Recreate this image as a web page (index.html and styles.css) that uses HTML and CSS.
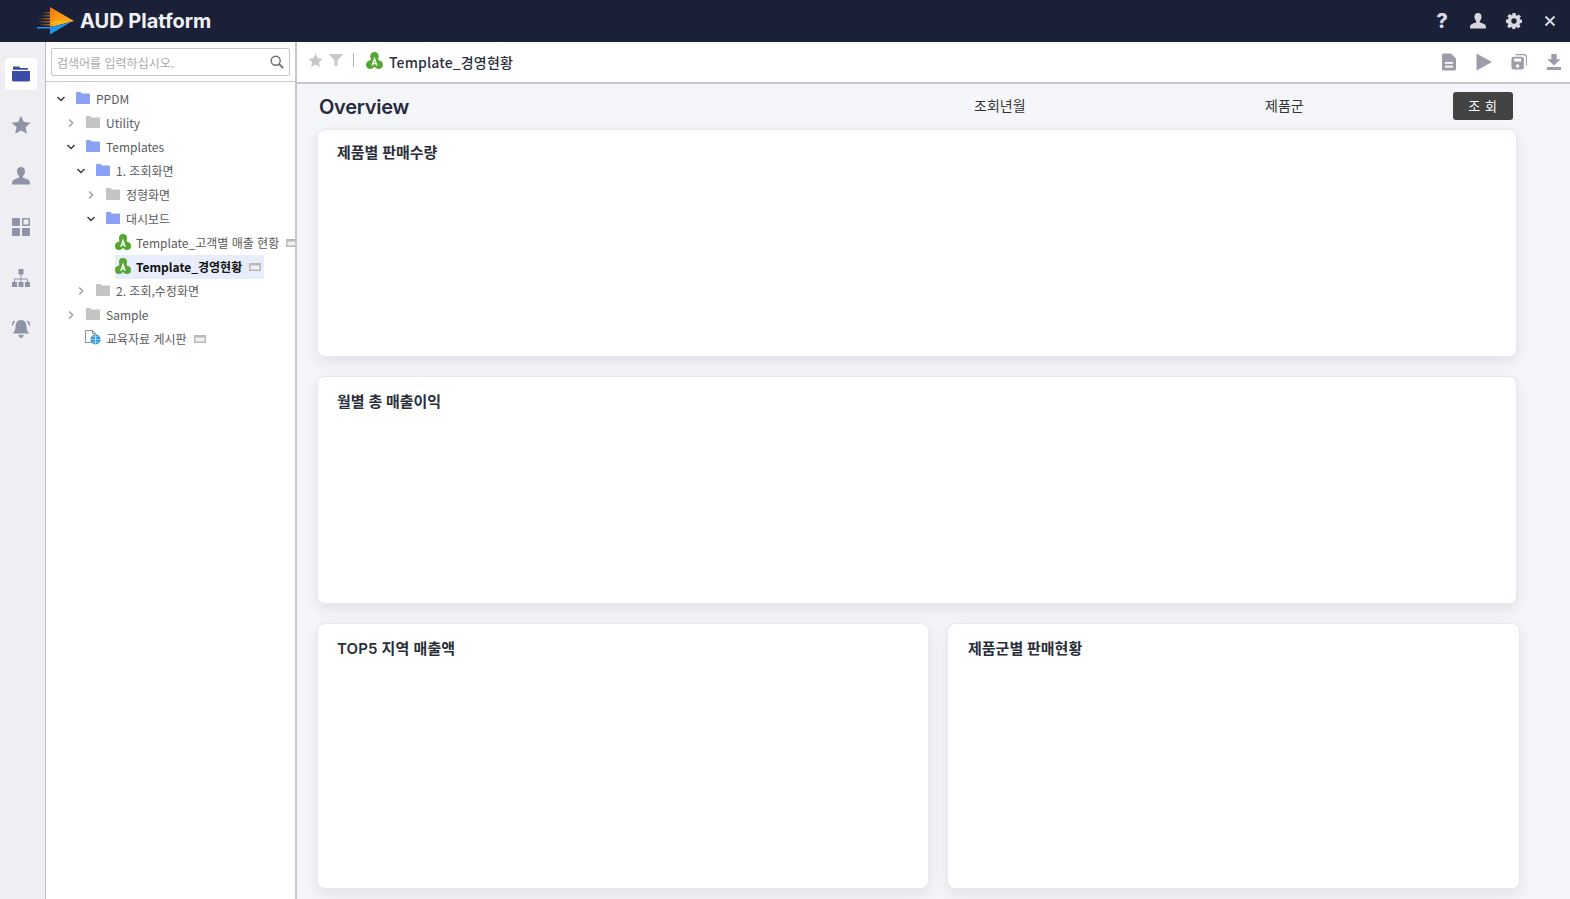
FILE: index.html
```html
<!DOCTYPE html>
<html lang="ko">
<head>
<meta charset="utf-8">
<title>AUD Platform</title>
<link rel="stylesheet" href="styles.css">
</head>
<body>
<svg class="defs" aria-hidden="true">
  <symbol id="folder" viewBox="0 0 14 12"><path d="M0 1a1 1 0 0 1 1-1h3.600l1.200 1.600H13a1 1 0 0 1 1 1V11a1 1 0 0 1-1 1H1a1 1 0 0 1-1-1z"/></symbol>
  <symbol id="open" viewBox="0 0 10 10"><path d="M1.500 3l3.500 3.500L8.500 3" fill="none" stroke="currentColor" stroke-width="1.500"/></symbol>
  <symbol id="closed" viewBox="0 0 10 10"><path d="M3.200 1.500L6.700 5 3.200 8.500" fill="none" stroke="currentColor" stroke-width="1.400"/></symbol>
  <symbol id="report" viewBox="0 0 16 16">
    <circle cx="8" cy="4" r="4" fill="#55a630"/><circle cx="4" cy="12" r="4" fill="#55a630"/><circle cx="12" cy="12" r="4" fill="#55a630"/><circle cx="8" cy="9.500" r="4.500" fill="#55a630"/>
    <path d="M5.800 12.800L8 6.500l2.200 6.300M6.500 10.900h3" fill="none" stroke="#fff" stroke-width="1.300"/>
  </symbol>
  <symbol id="win" viewBox="0 0 12 8"><rect width="12" height="8" fill="#b8b8b8"/><rect x="1.500" y="2.500" width="9" height="4" fill="#f0f0f0"/></symbol>
  <symbol id="star" viewBox="0 0 20 20"><path d="M10 .8l2.800 6.200 6.700.7-5 4.500 1.400 6.600L10 15.400 4.100 18.800l1.400-6.600-5-4.500 6.700-.7z"/></symbol>
  <symbol id="person" viewBox="0 0 18 18"><path d="M9 0c2.600 0 4 1.900 4 4.300 0 2-1 3.800-2 4.700v1.500c0 .6 5.700 1.600 6.500 3.500.3.800.5 2 .5 3.500H0c0-1.500.2-2.700.5-3.500C1.300 12.100 7 11.100 7 10.500V9C6 8.100 5 6.300 5 4.300 5 1.900 6.400 0 9 0z"/></symbol>
</svg>

<header class="topbar">
  <div class="brand">
    <svg class="logo" viewBox="0 0 38 28">
      <defs>
        <linearGradient id="streak" x1="0" x2="1" y1="0" y2="0"><stop offset="0" stop-color="#f08010" stop-opacity="0"/><stop offset="1" stop-color="#f08010"/></linearGradient>
        <linearGradient id="upper" x1="0" x2="1" y1="0" y2="1"><stop offset="0" stop-color="#f4780f"/><stop offset="1" stop-color="#fbb01c"/></linearGradient>
      </defs>
      <path d="M13 0l24 14H13z" fill="url(#upper)"/>
      <path d="M13 14h24l-21 5.500h-3z" fill="#fcb71e"/>
      <path d="M13 20.500l21-5.500-21 12.500z" fill="#2196ee"/>
      <path d="M0 20h14v1.500H0z" fill="#2196ee"/>
      <rect x="6" y="5" width="10" height="1.500" fill="url(#streak)"/>
      <rect x="4" y="8" width="12" height="1.500" fill="url(#streak)"/>
      <rect x="2" y="11" width="14" height="1.500" fill="url(#streak)"/>
      <rect x="0" y="14" width="16" height="1.500" fill="url(#streak)"/>
      <rect x="2" y="17" width="14" height="1.500" fill="url(#streak)"/>
    </svg>
    <span class="brand-name">AUD Platform</span>
  </div>
  <div class="top-actions">
    <span class="help">?</span>
    <svg class="top-icon user"><use href="#person"/></svg>
    <svg class="top-icon" viewBox="0 0 18 18"><path fill-rule="evenodd" d="M7.300 0h3.400l.4 2.400 1.300.6 2-1.400 2.400 2.400-1.400 2 .6 1.300 2 .4v3.400l-2.400.4-.6 1.300 1.400 2-2.400 2.400-2-1.400-1.300.6-.4 2.400H7.300l-.4-2.400-1.300-.6-2 1.400-2.400-2.400 1.400-2-.6-1.300-2-.4V7.300l2.400-.4.600-1.300-1.400-2 2.400-2.400 2 1.400 1.300-.6zM9 6a3 3 0 1 0 0 6 3 3 0 0 0 0-6z"/></svg>
    <svg class="top-close" viewBox="0 0 12 12"><path d="M1.500 1.500l9 9m0-9l-9 9" fill="none" stroke="currentColor" stroke-width="2"/></svg>
  </div>
</header>

<div class="workspace">
  <nav class="rail">
    <div class="rail-btn active"><svg viewBox="0 0 18 15"><path d="M1 0h6l1.500 1.500H16v1.800H1z"/><path d="M0 4.500h18v9A1.500 1.500 0 0 1 16.500 15h-15A1.500 1.500 0 0 1 0 13.500z"/></svg></div>
    <div class="rail-btn"><svg class="big"><use href="#star"/></svg></div>
    <div class="rail-btn"><svg><use href="#person"/></svg></div>
    <div class="rail-btn"><svg viewBox="0 0 18 18"><rect width="8" height="8" rx="1"/><path fill-rule="evenodd" d="M11 0h6a1 1 0 0 1 1 1v6a1 1 0 0 1-1 1h-6a1 1 0 0 1-1-1V1a1 1 0 0 1 1-1zm.5 1.500v5h5v-5z"/><rect y="10" width="8" height="8" rx="1"/><rect x="10" y="10" width="8" height="8" rx="1"/></svg></div>
    <div class="rail-btn"><svg viewBox="0 0 18 18"><path d="M6.500 0h5v5.500h-5zM0 13h5v5H0zM6.500 13h5v5h-5zM13 13h5v5h-5z"/><path d="M9 5.500V13M2.500 13v-3h13v3" fill="none" stroke="currentColor"/></svg></div>
    <div class="rail-btn"><svg viewBox="1 .5 18 18"><path d="M10 .5c3.800 0 5.400 3 5.400 6 0 3.500 1 5.500 3 7.500H1.600c2-2 3-4 3-7.500 0-3 1.600-6 5.400-6zM7.500 15.200h5c0 1.900-1.100 3.100-2.500 3.100s-2.500-1.200-2.500-3.100z"/><path d="M3.600 1.600C2 2.900 1.200 4.400 1 6.500m15.400-4.900C18 2.900 18.800 4.400 19 6.500" fill="none" stroke="currentColor" stroke-width="1.400"/></svg></div>
  </nav>

  <aside class="side">
    <div class="search-area">
      <div class="search">
        <span class="search-text">검색어를 입력하십시오.</span>
        <svg class="search-icon" viewBox="0 0 14 14"><circle cx="5.700" cy="5.700" r="4.500" fill="none" stroke="currentColor" stroke-width="1.400"/><path d="M9 9l4.200 4.200" stroke="currentColor" stroke-width="1.800"/></svg>
      </div>
    </div>
    <div class="tree">
      <div class="row l0"><svg class="chev dark"><use href="#open"/></svg><svg class="fold blue"><use href="#folder"/></svg><span>PPDM</span></div>
      <div class="row l1"><svg class="chev"><use href="#closed"/></svg><svg class="fold"><use href="#folder"/></svg><span>Utility</span></div>
      <div class="row l1"><svg class="chev dark"><use href="#open"/></svg><svg class="fold blue"><use href="#folder"/></svg><span>Templates</span></div>
      <div class="row l2"><svg class="chev dark"><use href="#open"/></svg><svg class="fold blue"><use href="#folder"/></svg><span>1. 조회화면</span></div>
      <div class="row l3"><svg class="chev"><use href="#closed"/></svg><svg class="fold"><use href="#folder"/></svg><span>정형화면</span></div>
      <div class="row l3"><svg class="chev dark"><use href="#open"/></svg><svg class="fold blue"><use href="#folder"/></svg><span>대시보드</span></div>
      <div class="row l4"><svg class="rep"><use href="#report"/></svg><span class="leaf-text">Template_고객별 매출 현황</span><svg class="win"><use href="#win"/></svg></div>
      <div class="row l4"><div class="selected"><svg class="rep"><use href="#report"/></svg><span class="leaf-text strong">Template_경영현황</span><svg class="win"><use href="#win"/></svg></div></div>
      <div class="row l2"><svg class="chev"><use href="#closed"/></svg><svg class="fold"><use href="#folder"/></svg><span>2. 조회,수정화면</span></div>
      <div class="row l1"><svg class="chev"><use href="#closed"/></svg><svg class="fold"><use href="#folder"/></svg><span>Sample</span></div>
      <div class="row l1b">
        <svg class="doc" viewBox="0 0 16 15"><path d="M.5.500h7l3 3v9h-10z" fill="#fff" stroke="#8a8f98"/><path d="M7.500.500v3h3" fill="none" stroke="#8a8f98"/><circle cx="10.500" cy="9.500" r="5" fill="#2d92d4"/><path d="M5.500 9.500h10M10.500 4.500v10M7.500 6.500c2 1 4 1 6 0M7.500 12.500c2-1 4-1 6 0" fill="none" stroke="#d9eefb" stroke-width=".7"/></svg>
        <span>교육자료 게시판</span><svg class="win"><use href="#win"/></svg>
      </div>
    </div>
  </aside>

  <main class="main">
    <div class="toolbar">
      <svg class="tb-star"><use href="#star"/></svg>
      <svg class="tb-filter" viewBox="0 0 14 14"><path d="M0 1h14L8.500 7.500V13h-3V7.500z"/></svg>
      <span class="tb-div"></span>
      <svg class="tb-rep"><use href="#report"/></svg>
      <span class="tb-title">Template_경영현황</span>
      <div class="tb-right">
        <svg class="tb-i" viewBox="0 0 16 18"><path fill-rule="evenodd" d="M2.500 .5h7.500l5 5v10.500a1.500 1.500 0 0 1-1.500 1.500h-11A1.500 1.500 0 0 1 1 16V2a1.500 1.500 0 0 1 1.500-1.500zm1.500 8.500v1.800h8V9zm0 3.700v1.800h8v-1.800z"/></svg>
        <svg class="tb-i" viewBox="0 0 16 18"><path d="M.5 .5L16 9 .5 17.500z"/></svg>
        <svg class="tb-i" viewBox="0 0 18 18"><path fill-rule="evenodd" d="M3 3h9a2.500 2.500 0 0 1 2.500 2.500V15a2.500 2.500 0 0 1-2.500 2.500H3A2.500 2.500 0 0 1 .5 15V5.500A2.500 2.500 0 0 1 3 3zm.5 2v3.500h8V5zm4 6.500a2 2 0 1 0 0 4 2 2 0 0 0 0-4z"/><path d="M5 .7h9.500A3 3 0 0 1 17.500 4v9" fill="none" stroke="currentColor" stroke-width="1.400"/></svg>
        <svg class="tb-i" viewBox="0 0 18 18"><path d="M6 0h6v6h4.500L9 13 1.500 6H6zM1 14.500h16V18H1z"/></svg>
      </div>
    </div>
    <div class="content">
      <div class="filters">
        <h1 class="overview">Overview</h1>
        <span class="filter f1">조회년월</span>
        <span class="filter f2">제품군</span>
        <button class="search-btn">조 회</button>
      </div>
      <section class="card wide top"><h2>제품별 판매수량</h2></section>
      <section class="card wide"><h2>월별 총 매출이익</h2></section>
      <div class="card-row">
        <section class="card half-a"><h2>TOP5 지역 매출액</h2></section>
        <section class="card half-b"><h2>제품군별 판매현황</h2></section>
      </div>
    </div>
  </main>
</div>
</body>
</html>
```

FILE: styles.css
```css
* { box-sizing: border-box; }
html, body { height: 100%; }
body {
  margin: 0;
  height: 899px;
  overflow: hidden;
  display: flex;
  flex-direction: column;
  font-family: "Noto Sans CJK KR", "Noto Sans", sans-serif;
  background: #fff;
}
.defs { width: 0; height: 0; position: absolute; }

.topbar {
  height: 42px;
  flex: none;
  background: #1a2038;
  display: flex;
  align-items: center;
  justify-content: space-between;
  padding: 0 14px 0 37px;
}
.brand { display: flex; align-items: center; }
.logo { width: 38px; height: 28px; }
.brand-name {
  margin-left: 5px;
  font-family: Inter, "Liberation Sans", sans-serif;
  font-weight: 700;
  font-size: 20px;
  color: #f1f1f4;
}
.top-actions { display: flex; align-items: center; color: #d8d9e0; }
.help { font-family: Inter, sans-serif; font-weight: 800; font-size: 20px; width: 16px; text-align: center; color: #d8d9e0; }
.top-icon { width: 16px; height: 16px; margin-left: 20px; fill: #d8d9e0; }
.top-icon.user { width: 18px; margin-left: 19px; }
.top-icon.user + .top-icon { margin-left: 19px; }
.top-close { width: 12px; height: 12px; margin-left: 22px; }

.workspace { flex: 1; display: flex; min-height: 0; }

.rail {
  width: 46px;
  flex: none;
  background: #eeeef3;
  border-right: 1px solid #bdbdc2;
  padding: 16px 0 0 5px;
  display: flex;
  flex-direction: column;
  gap: 19px;
}
.rail-btn {
  width: 32px;
  height: 32px;
  display: flex;
  align-items: center;
  justify-content: center;
  color: #8e93a6;
  fill: #8e93a6;
  border-radius: 4px;
}
.rail-btn svg { width: 18px; height: 18px; }
.rail-btn svg.big { width: 20px; height: 20px; }
.rail-btn.active { background: #fff; color: #3a4ba8; fill: #3a4ba8; }

.side {
  width: 251px;
  flex: none;
  border-right: 2px solid #c8c8cc;
  overflow: hidden;
  background: #fff;
}
.search-area {
  height: 40px;
  padding: 6px 5px 0 5px;
  border-bottom: 1px solid #c8c8cc;
}
.search {
  width: 239px;
  height: 28px;
  border: 1px solid #c6c6c6;
  border-radius: 2px;
  display: flex;
  align-items: center;
  justify-content: space-between;
  padding: 0 5px 0 5px;
}
.search-text { font-size: 12px; color: #a9a9a9; }
.search-icon { width: 14px; height: 14px; color: #6e6e6e; }

.tree { padding-top: 5px; }
.row {
  height: 24px;
  display: flex;
  align-items: center;
  font-size: 12px;
  color: #5a5a5a;
  white-space: nowrap;
}
.row span { margin-top: -2px; }
.l0 { padding-left: 10px; }
.l1 { padding-left: 20px; }
.l1b { padding-left: 39px; }
.l2 { padding-left: 30px; }
.l3 { padding-left: 40px; }
.l4 { padding-left: 69px; }
.chev { width: 10px; height: 10px; margin-right: 10px; color: #9c9c9c; flex: none; }
.chev.dark { color: #3d3d3d; }
.fold { width: 14px; height: 12px; margin: -3px 6px 0 0; fill: #c4c4c4; flex: none; }
.fold.blue { fill: #8aa1f5; }
.rep { width: 16px; height: 16px; margin-top: -3px; flex: none; }
.row .leaf-text { margin: -1px 0 0 5px; }
.win { width: 12px; height: 8px; margin-left: 7px; flex: none; }
.selected {
  height: 24px;
  width: 149px;
  display: flex;
  align-items: center;
  background: #e8edfb;
}
.row .strong { font-weight: 700; color: #111; }
.doc { width: 16px; height: 15px; margin: -3px 5px 0 0; flex: none; }

.main { flex: 1; min-width: 0; display: flex; flex-direction: column; }
.toolbar {
  height: 42px;
  flex: none;
  display: flex;
  align-items: center;
  padding: 0 8px 0 11px;
  border-bottom: 2px solid #c8c8cc;
  background: #fff;
}
.tb-star { width: 15px; height: 15px; fill: #c8c8cc; margin-top: -4px; }
.tb-filter { width: 14px; height: 14px; fill: #c8c8cc; margin: -4px 0 0 6px; }
.tb-div { width: 1px; height: 14px; background: #b5b5b5; margin: -4px 0 0 10px; }
.tb-rep { width: 17px; height: 17px; margin: -3px 0 0 12px; }
.tb-title { margin-left: 6px; font-size: 14px; font-weight: 500; letter-spacing: .15px; color: #2b3040; }
.tb-right { margin-left: auto; display: flex; align-items: center; gap: 19px; }
.tb-i { width: 16px; height: 18px; fill: #9c9da8; color: #9c9da8; }

.content { flex: 1; min-height: 0; background: #f5f6f9; padding: 0 0 0 20px; overflow: hidden; }
.filters { height: 45px; display: flex; align-items: center; flex: none; }
.overview {
  margin: 0 0 0 2px;
  width: 655px;
  font-family: Inter, sans-serif;
  font-size: 20px;
  font-weight: 600;
  letter-spacing: -.25px;
  color: #252c40;
}
.filter { font-size: 14px; color: #333; margin-top: -3px; }
.f1 { width: 291px; }
.f2 { width: 188px; }
.search-btn {
  width: 60px;
  height: 28px;
  margin-top: -1px;
  border: 0;
  padding: 0 0 2px;
  border-radius: 3px;
  background: #434343;
  color: #fff;
  font: 13px "Noto Sans CJK KR", sans-serif;
  letter-spacing: .6px;
}
.card {
  background: #fff;
  border: 1px solid #e6e9f2;
  border-radius: 8px;
  box-shadow: 0 5px 14px rgba(40, 44, 60, .1);
  padding: 13px 19px;
}
.card.top { padding-top: 11px; }
.card h2 {
  margin: 0;
  font-family: Inter, "Noto Sans CJK KR", sans-serif;
  font-size: 15px;
  font-weight: 600;
  color: #2a2e3a;
}
.wide { width: 1200px; height: 228px; margin-bottom: 19px; }
.card-row { display: flex; gap: 18px; }
.half-a { width: 612px; height: 266px; }
.half-a h2 { letter-spacing: .15px; }
.half-b { width: 573px; height: 266px; padding-left: 20px; }
```
